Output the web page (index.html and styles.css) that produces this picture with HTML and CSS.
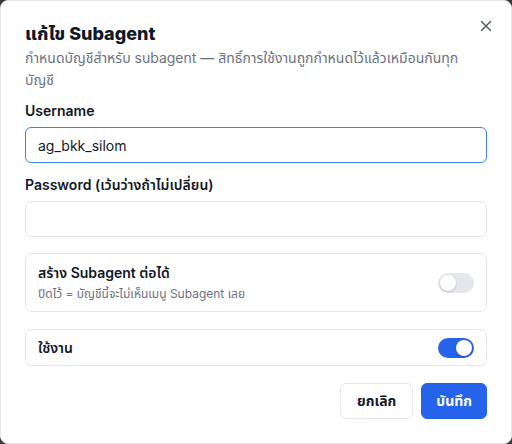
FILE: index.html
```html
<!DOCTYPE html>
<html lang="th">
<head>
    <meta charset="UTF-8">
    <title>แก้ไข Subagent</title>
    <link rel="stylesheet" href="styles.css">
</head>
<body>
    <div class="dialog">
        <button class="close" aria-label="ปิด">
            <svg width="12" height="12" viewBox="0 0 12 12"><path d="M1.5 1.5l9 9M10.5 1.5l-9 9" stroke="#4b5563" stroke-width="1.4" stroke-linecap="round"/></svg>
        </button>

        <h1>แก้ไข Subagent</h1>
        <p class="desc">กำหนดบัญชีสำหรับ subagent — สิทธิ์การใช้งานถูกกำหนดไว้แล้วเหมือนกันทุกบัญชี</p>

        <label class="label" for="username">Username</label>
        <input class="field focus" id="username" type="text" value="ag_bkk_silom">

        <label class="label" for="password">Password (เว้นว่างถ้าไม่เปลี่ยน)</label>
        <input class="field" id="password" type="password">

        <div class="option">
            <div>
                <div class="option-title">สร้าง Subagent ต่อได้</div>
                <div class="option-sub">ปิดไว้ = บัญชีนี้จะไม่เห็นเมนู Subagent เลย</div>
            </div>
            <span class="toggle"></span>
        </div>

        <div class="option small">
            <div class="option-title">ใช้งาน</div>
            <span class="toggle on"></span>
        </div>

        <div class="actions">
            <button class="btn">ยกเลิก</button>
            <button class="btn primary">บันทึก</button>
        </div>
    </div>
</body>
</html>
```

FILE: styles.css
```css
* {
    box-sizing: border-box;
}

html, body {
    margin: 0;
    background-color: #3a3a3a;
}

body {
    font-family: Inter, "Noto Sans", "Noto Sans Thai", sans-serif;
    color: #111827;
}

.dialog {
    position: relative;
    width: 512px;
    height: 444px;
    background-color: #ffffff;
    border: 1px solid #e5e7eb;
    border-radius: 8px;
    padding: 16px 24px 24px 24px;
}

.close {
    position: absolute;
    top: 17px;
    right: 17px;
    width: 16px;
    height: 16px;
    padding: 0;
    border: none;
    background: none;
    display: flex;
    align-items: center;
    justify-content: center;
}

h1 {
    margin: 0;
    font-size: 18px;
    font-weight: 800;
    line-height: 30px;
    padding-top: 2px;
}

.desc {
    margin: -2px 0 0 0;
    font-size: 14px;
    line-height: 22px;
    color: #6b7280;
}

.label {
    display: block;
    height: 20px;
    margin-top: 10px;
    font-size: 14px;
    font-weight: 600;
    line-height: 20px;
}

.field {
    display: block;
    width: 100%;
    height: 36px;
    margin-top: 6px;
    padding: 0 12px;
    font-family: inherit;
    font-size: 14px;
    color: #111827;
    border: 1px solid #e5e7eb;
    border-radius: 6px;
    outline: none;
}

.field.focus {
    border-color: #3b82f6;
    margin-bottom: 12px;
}

.option {
    display: flex;
    align-items: center;
    justify-content: space-between;
    margin-top: 16px;
    padding: 9px 12px 9px 12px;
    border: 1px solid #e5e7eb;
    border-radius: 6px;
    height: 59px;
}

.option.small {
    height: 37px;
    margin-top: 17px;
    padding: 0 12px;
}

.option-title {
    font-size: 14px;
    font-weight: 600;
    line-height: 20px;
}

.option-sub {
    margin-top: 2px;
    font-size: 12px;
    line-height: 18px;
    color: #6b7280;
}

.toggle {
    position: relative;
    width: 36px;
    height: 20px;
    border-radius: 10px;
    background-color: #e5e7eb;
    flex-shrink: 0;
}

.toggle::after {
    content: "";
    position: absolute;
    top: 2px;
    left: 2px;
    width: 16px;
    height: 16px;
    border-radius: 50%;
    background-color: #ffffff;
    box-shadow: 0 1px 2px rgba(0,0,0,0.2);
}

.toggle.on {
    background-color: #2563eb;
}

.toggle.on::after {
    left: 18px;
}

.actions {
    display: flex;
    justify-content: flex-end;
    gap: 8px;
    margin-top: 17px;
}

.btn {
    height: 36px;
    padding: 0 16px;
    font-family: inherit;
    font-size: 14px;
    font-weight: 700;
    color: #111827;
    background-color: #ffffff;
    border: 1px solid #e5e7eb;
    border-radius: 6px;
}

.btn.primary {
    padding: 0 14px;
    color: #ffffff;
    background-color: #2563eb;
    border-color: #2563eb;
}
```
